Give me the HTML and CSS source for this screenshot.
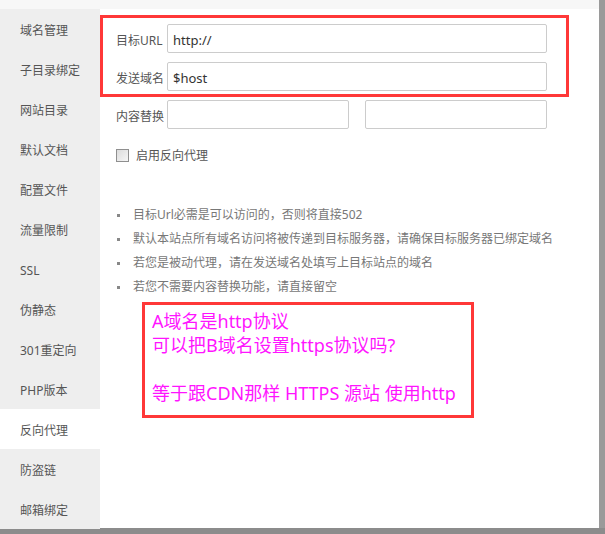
FILE: index.html
```html
<!DOCTYPE html>
<html lang="zh-CN">
<head>
    <meta charset="UTF-8">
    <title>反向代理</title>
    <link rel="stylesheet" href="styles.css">
</head>
<body>

<div class="dialog">
    <div class="topbar"></div>
    <div class="main">
        <ul class="sidebar">
            <li>域名管理</li>
            <li>子目录绑定</li>
            <li>网站目录</li>
            <li>默认文档</li>
            <li>配置文件</li>
            <li>流量限制</li>
            <li>SSL</li>
            <li>伪静态</li>
            <li>301重定向</li>
            <li>PHP版本</li>
            <li class="active">反向代理</li>
            <li>防盗链</li>
            <li>邮箱绑定</li>
        </ul>

        <div class="content">
            <div class="mark-box"></div>

            <div class="form-row">
                <label>目标URL</label>
                <input type="text" class="wide" value="http://">
            </div>
            <div class="form-row">
                <label>发送域名</label>
                <input type="text" class="wide" value="$host">
            </div>
            <div class="form-row">
                <label>内容替换</label>
                <input type="text" class="half">
                <input type="text" class="half">
            </div>

            <div class="check-row">
                <span class="checkbox"></span>
                <span>启用反向代理</span>
            </div>

            <ul class="tips">
                <li>目标Url必需是可以访问的，否则将直接502</li>
                <li>默认本站点所有域名访问将被传递到目标服务器，请确保目标服务器已绑定域名</li>
                <li>若您是被动代理，请在发送域名处填写上目标站点的域名</li>
                <li>若您不需要内容替换功能，请直接留空</li>
            </ul>

            <div class="note">
                <p>A域名是http协议</p>
                <p>可以把B域名设置https协议吗?</p>
                <p>&nbsp;</p>
                <p>等于跟CDN那样 HTTPS 源站 使用http</p>
            </div>
        </div>
    </div>
</div>

</body>
</html>
```

FILE: styles.css
```css
body {
    margin: 0;
    width: 605px;
    height: 534px;
    overflow: hidden;
    background-color: #8c8c8c; /* page behind the dialog */
    font-family: "Noto Sans", "Noto Sans CJK SC", sans-serif;
    color: #555555;
}
.dialog {
    width: 599px;
    height: 528px;
    background-color: #ffffff;
    display: flex;
    flex-direction: column;
    box-shadow: 6px 0 0 #9a9a9a;
}
.topbar {
    height: 9px;
    background-color: #f7f7f7;
    flex-shrink: 0;
}
.main {
    display: flex;
    flex: 1;
}

/* Left menu */
.sidebar {
    width: 100px;
    margin: 0;
    padding: 0;
    list-style: none;
    background-color: #eeeeee;
}
.sidebar li {
    height: 40px;
    box-sizing: border-box;
    padding: 4px 0 0 20px;
    line-height: 36px;
    font-size: 12px;
    color: #555555;
}
.sidebar li.active {
    background-color: #ffffff;
}

/* Right side */
.content {
    flex: 1;
    position: relative;
    padding-top: 15px;
}
.mark-box {
    position: absolute;
    left: 0;
    top: 6px;
    width: 469px;
    height: 82px;
    box-sizing: border-box;
    border: 3px solid #ff3838;
}
.form-row {
    display: flex;
    align-items: center;
    height: 29px;
    margin-bottom: 9px;
    padding-left: 16px;
}
.form-row label {
    width: 51px;
    padding-top: 3px;
    font-size: 12px;
    color: #555555;
}
.form-row input {
    height: 29px;
    box-sizing: border-box;
    border: 1px solid #cccccc;
    border-radius: 2px;
    padding: 3px 5px 0 5px;
    font-family: "Noto Sans", "Noto Sans CJK SC", sans-serif;
    font-size: 13px;
    color: #333333;
    outline: none;
}
.form-row input.wide {
    width: 380px;
}
.form-row input.half {
    width: 182px;
    margin-right: 16px;
}

.check-row {
    display: flex;
    align-items: center;
    margin-top: 17px;
    padding-left: 16px;
    font-size: 12px;
    color: #555555;
}
.checkbox {
    width: 11px;
    height: 11px;
    border: 1px solid #8f8f8f;
    background: linear-gradient(135deg, #dcdcdc, #f6f6f6);
    margin-right: 7px;
}

/* Tips list */
.tips {
    margin: 38px 0 0 0;
    padding: 0 0 0 33px;
    list-style: none;
}
.tips li {
    position: relative;
    height: 24px;
    padding-top: 1px;
    box-sizing: border-box;
    line-height: 24px;
    font-size: 12px;
    color: #777777;
}
.tips li::before {
    content: "";
    position: absolute;
    left: -16px;
    top: 12px;
    width: 3px;
    height: 3px;
    background-color: #888888;
}

/* Annotation */
.note {
    width: 332px;
    height: 116px;
    box-sizing: border-box;
    margin: 4px 0 0 42px;
    padding: 4px 0 0 7px;
    border: 3px solid #ff3838;
}
.note p {
    margin: 0;
    line-height: 24px;
    font-size: 18px;
    color: #ff14ff;
    white-space: nowrap;
}
```
